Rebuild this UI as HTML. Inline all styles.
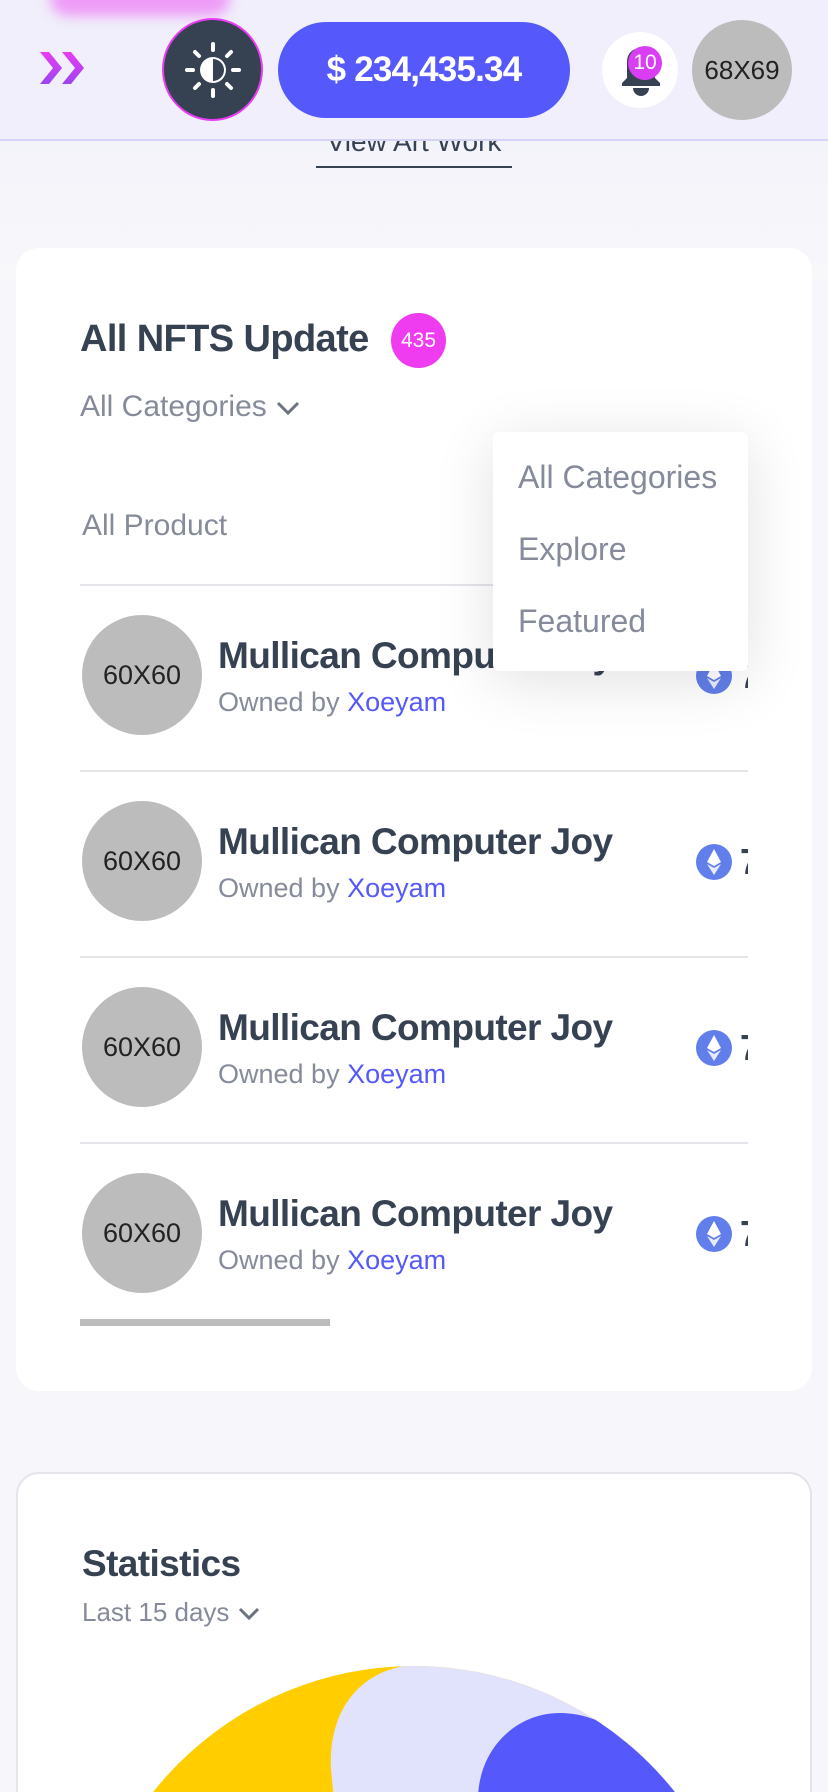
<!DOCTYPE html>
<html><head><meta charset="utf-8">
<style>
*{margin:0;padding:0;box-sizing:border-box}
html{width:828px;height:1792px;overflow:hidden}
body{width:828px;height:1792px;overflow:hidden;background:#f6f6fb;font-family:"Liberation Sans",sans-serif;position:relative;color:#364152}
.abs{position:absolute}
.header{left:0;top:0;width:828px;height:139px;background:#f0effb;border-bottom:2px solid #d4d3f5}
.blob{left:50px;top:-20px;width:180px;height:36px;border-radius:20px;background:#ee9cf7;filter:blur(6px)}
.card{background:#fff;border-radius:23px}
.title{font-weight:bold;letter-spacing:-0.6px}
.gray{color:#858b9a}
.row{left:80px;width:668px;height:186px;overflow:hidden}
.av{position:absolute;left:2px;top:30px;width:120px;height:120px;border-radius:50%;background:#bcbcbc;font-size:27px;color:#222;display:flex;align-items:center;justify-content:center}
.rt{position:absolute;left:138px;top:50px;font-size:37px;font-weight:bold;letter-spacing:-0.6px;white-space:nowrap;color:#364152}
.ro{position:absolute;left:138px;top:102px;font-size:27px;color:#858b9a;white-space:nowrap}
.ro span{color:#5558fb}
.eth{position:absolute;left:616px;top:73px;width:36px;height:36px}
.sep{left:80px;width:668px;height:2px;background:#e4e4ea}
</style></head><body>
<div class="abs" style="left:0;top:140px;width:828px;height:140px;background:linear-gradient(#f3f3fa,#f8f8fb)"></div>
<div class="abs header"></div>
<div class="abs blob"></div>
<svg class="abs" style="left:38px;top:48px" width="54" height="40" viewBox="0 0 54 40">
<defs><linearGradient id="g" x1="0" y1="0" x2="0" y2="1"><stop offset="0" stop-color="#e83cf5"/><stop offset="1" stop-color="#9a45f0"/></linearGradient></defs>
<path d="M2 4h9l13 16-13 16H2l13-16z" fill="url(#g)"/><path d="M24 4h9l13 16-13 16h-9l13-16z" fill="url(#g)"/></svg>
<div class="abs" style="left:162px;top:18px;width:101px;height:103px;border-radius:50%;background:#364152;border:2px solid #e83cf5"></div>
<svg class="abs" style="left:182px;top:39px" width="62" height="62" viewBox="0 0 62 62">
<g stroke="#fff" stroke-width="4" stroke-linecap="round"><path d="M31 5v6M31 51v6M5 31h6M51 31h6M13 13l4 4M45 45l4 4M13 49l4-4M45 17l4-4"/></g>
<circle cx="31" cy="31" r="13" fill="#fff"/><path d="M31 20a11 11 0 0 1 0 22z" fill="#364152"/></svg>
<div class="abs" style="left:278px;top:22px;width:292px;height:96px;border-radius:48px;background:#5558fb;color:#fff;font-weight:bold;font-size:35px;display:flex;align-items:center;justify-content:center;letter-spacing:-0.8px">$ 234,435.34</div>
<div class="abs" style="left:602px;top:32px;width:76px;height:76px;border-radius:50%;background:#fff"></div>
<svg class="abs" style="left:618px;top:44px" width="46" height="52" viewBox="0 0 46 52"><path d="M23 4c-9 0-14 6-14 14v16l-5 5v3h38v-3l-5-5V18c0-8-5-14-14-14z" fill="#364152"/><path d="M15 44h16a8 8 0 0 1-16 0z" fill="#364152"/></svg>
<div class="abs" style="left:628px;top:46px;width:34px;height:34px;border-radius:50%;background:#d93ef5;color:#fff;font-size:21px;display:flex;align-items:center;justify-content:center">10</div>
<div class="abs" style="left:692px;top:20px;width:100px;height:100px;border-radius:50%;background:#bcbcbc;font-size:26px;color:#222;display:flex;align-items:center;justify-content:center">68X69</div>
<div class="abs" style="left:316px;top:124px;width:196px;height:44px;overflow:hidden;border-bottom:2px solid #364152"><div style="font-size:28px;color:#364152;text-align:center;margin-top:2px">View Art Work</div></div>
<div class="abs" style="left:0;top:124px;width:828px;height:16px;background:#f0effb"></div>
<div class="abs" style="left:0;top:139px;width:828px;height:2px;background:#d4d3f5"></div>
<div class="abs card" style="left:16px;top:248px;width:796px;height:1143px"></div>
<div class="abs title" style="left:80px;top:318px;font-size:38px">All NFTS Update</div>
<div class="abs" style="left:391px;top:313px;width:55px;height:55px;border-radius:50%;background:#f03cf0;color:#fff;font-size:21px;display:flex;align-items:center;justify-content:center">435</div>
<div class="abs gray" style="left:80px;top:390px;font-size:30px">All Categories <svg width="26" height="16" viewBox="0 0 26 16"><path d="M3 3l10 10 10-10" stroke="#6b7280" stroke-width="3" fill="none"/></svg></div>
<div class="abs gray" style="left:82px;top:509px;font-size:30px">All Product</div>
<div class="abs sep" style="top:584px"></div>
<div class="abs row" style="top:585px"><div class="av">60X60</div><div class="rt">Mullican Computer Joy</div><div class="ro">Owned by <span>Xoeyam</span></div><svg class="eth" viewBox="0 0 36 36"><circle cx="18" cy="18" r="18" fill="#627eea"/><path d="M18 5l-7 13 7 4 7-4z" fill="#fff"/><path d="M18 24l-7-4 7 11 7-11z" fill="#fff" opacity=".85"/></svg><div class="rt" style="left:660px;top:70px;font-size:36px">7</div></div>
<div class="abs sep" style="top:770px"></div>
<div class="abs row" style="top:771px"><div class="av">60X60</div><div class="rt">Mullican Computer Joy</div><div class="ro">Owned by <span>Xoeyam</span></div><svg class="eth" viewBox="0 0 36 36"><circle cx="18" cy="18" r="18" fill="#627eea"/><path d="M18 5l-7 13 7 4 7-4z" fill="#fff"/><path d="M18 24l-7-4 7 11 7-11z" fill="#fff" opacity=".85"/></svg><div class="rt" style="left:660px;top:70px;font-size:36px">7</div></div>
<div class="abs sep" style="top:956px"></div>
<div class="abs row" style="top:957px"><div class="av">60X60</div><div class="rt">Mullican Computer Joy</div><div class="ro">Owned by <span>Xoeyam</span></div><svg class="eth" viewBox="0 0 36 36"><circle cx="18" cy="18" r="18" fill="#627eea"/><path d="M18 5l-7 13 7 4 7-4z" fill="#fff"/><path d="M18 24l-7-4 7 11 7-11z" fill="#fff" opacity=".85"/></svg><div class="rt" style="left:660px;top:70px;font-size:36px">7</div></div>
<div class="abs sep" style="top:1142px"></div>
<div class="abs row" style="top:1143px"><div class="av">60X60</div><div class="rt">Mullican Computer Joy</div><div class="ro">Owned by <span>Xoeyam</span></div><svg class="eth" viewBox="0 0 36 36"><circle cx="18" cy="18" r="18" fill="#627eea"/><path d="M18 5l-7 13 7 4 7-4z" fill="#fff"/><path d="M18 24l-7-4 7 11 7-11z" fill="#fff" opacity=".85"/></svg><div class="rt" style="left:660px;top:70px;font-size:36px">7</div></div>
<div class="abs" style="left:80px;top:1319px;width:250px;height:7px;background:#bcbcbc"></div>
<div class="abs" style="left:493px;top:432px;width:255px;height:239px;background:#fff;border-radius:6px;box-shadow:0 10px 60px rgba(0,0,0,0.12)">
<div class="gray" style="position:absolute;left:25px;top:27px;font-size:32px">All Categories</div>
<div class="gray" style="position:absolute;left:25px;top:99px;font-size:32px">Explore</div>
<div class="gray" style="position:absolute;left:25px;top:171px;font-size:32px">Featured</div></div>
<div class="abs card" style="left:16px;top:1472px;width:796px;height:360px;border:2px solid #e4e4ea"></div>
<div class="abs title" style="left:82px;top:1543px;font-size:37px">Statistics</div>
<div class="abs gray" style="left:82px;top:1597px;font-size:26px">Last 15 days <svg width="24" height="14" viewBox="0 0 24 14"><path d="M3 2l9 9 9-9" stroke="#6b7280" stroke-width="3" fill="none"/></svg></div>
<svg class="abs" style="left:0;top:1600px" width="828" height="192" viewBox="0 1600 828 192">
<defs><clipPath id="c"><circle cx="414" cy="1999" r="333"/></clipPath></defs>
<g clip-path="url(#c)">
<rect x="0" y="1600" width="828" height="200" fill="#ffcd00"/>
<path d="M412 1665 C360 1670 328 1710 331 1770 L334 1800 L828 1800 L828 1600 L412 1600z" fill="#e1e2fc"/>
<path d="M478 1800 C478 1750 515 1713 560 1713 C600 1713 640 1740 700 1790 L828 1800z" fill="#5558fb"/>
</g></svg>
</body></html>
